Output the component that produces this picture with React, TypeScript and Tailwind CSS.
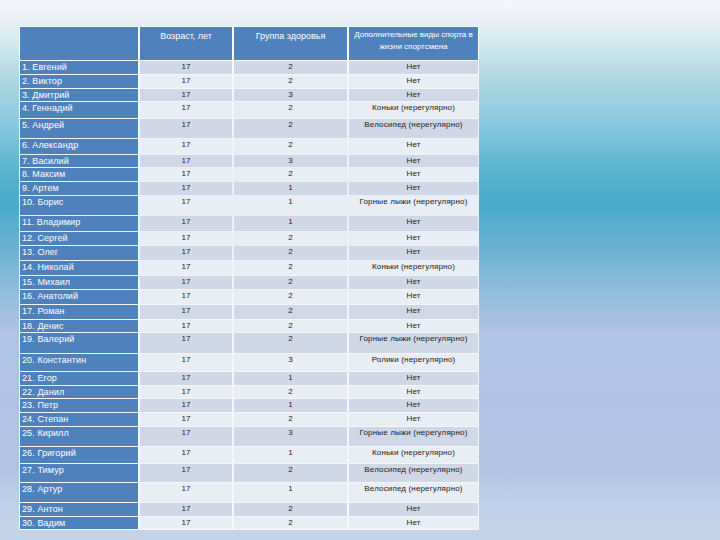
type Row = {
  name: string;
  group: string;
  sport: string;
  h: string;
};

// row heights are taken from the slide, they are not uniform
const rows: Row[] = [
  { name: "1. Евгений", group: "2", sport: "Нет", h: "h-[13px]" },
  { name: "2. Виктор", group: "2", sport: "Нет", h: "h-[13px]" },
  { name: "3. Дмитрий", group: "3", sport: "Нет", h: "h-[12px]" },
  { name: "4. Геннадий", group: "2", sport: "Коньки (нерегулярно)", h: "h-[16px]" },
  { name: "5. Андрей", group: "2", sport: "Велосипед (нерегулярно)", h: "h-[19px]" },
  { name: "6. Александр", group: "2", sport: "Нет", h: "h-[15px]" },
  { name: "7. Василий", group: "3", sport: "Нет", h: "h-[12px]" },
  { name: "8. Максим", group: "2", sport: "Нет", h: "h-[13px]" },
  { name: "9. Артем", group: "1", sport: "Нет", h: "h-[13px]" },
  { name: "10. Борис", group: "1", sport: "Горные лыжи (нерегулярно)", h: "h-[19px]" },
  { name: "11. Владимир", group: "1", sport: "Нет", h: "h-[15px]" },
  { name: "12. Сергей", group: "2", sport: "Нет", h: "h-[13px]" },
  { name: "13. Олег", group: "2", sport: "Нет", h: "h-[14px]" },
  { name: "14. Николай", group: "2", sport: "Коньки (нерегулярно)", h: "h-[14px]" },
  { name: "15. Михаил", group: "2", sport: "Нет", h: "h-[13px]" },
  { name: "16. Анатолий", group: "2", sport: "Нет", h: "h-[14px]" },
  { name: "17. Роман", group: "2", sport: "Нет", h: "h-[14px]" },
  { name: "18. Денис", group: "2", sport: "Нет", h: "h-[12px]" },
  { name: "19. Валерий", group: "2", sport: "Горные лыжи (нерегулярно)", h: "h-[20px]" },
  { name: "20. Константин", group: "3", sport: "Ролики (нерегулярно)", h: "h-[17px]" },
  { name: "21. Егор", group: "1", sport: "Нет", h: "h-[13px]" },
  { name: "22. Данил", group: "2", sport: "Нет", h: "h-[12px]" },
  { name: "23. Петр", group: "1", sport: "Нет", h: "h-[13px]" },
  { name: "24. Степан", group: "2", sport: "Нет", h: "h-[13px]" },
  { name: "25. Кирилл", group: "3", sport: "Горные лыжи (нерегулярно)", h: "h-[19px]" },
  { name: "26. Григорий", group: "1", sport: "Коньки (нерегулярно)", h: "h-[16px]" },
  { name: "27. Тимур", group: "2", sport: "Велосипед (нерегулярно)", h: "h-[18px]" },
  { name: "28. Артур", group: "1", sport: "Велосипед (нерегулярно)", h: "h-[19px]" },
  { name: "29. Антон", group: "2", sport: "Нет", h: "h-[13px]" },
  { name: "30. Вадим", group: "2", sport: "Нет", h: "h-[12px]" },
];

const font = "font-['Liberation_Sans',Arial,sans-serif]";

export default function App() {
  return (
    <div
      className={`h-[540px] w-[720px] overflow-hidden pl-[19px] pt-[26px] ${font} bg-[linear-gradient(180deg,#f4f7fa_0px,#edf2f6_15px,#e3edf5_28px,#d8eef0_34px,#c8e4ec_50px,#bcdce8_67px,#a8d4e0_87px,#96cee0_110px,#88c8e0_127px,#6cbcd4_150px,#56b0cc_180px,#48aac8_207px,#5eb0cf_233px,#70b2d0_253px,#80b8d8_273px,#96c0dc_300px,#a8c2e0_323px,#aec4e2_333px,#b0c2e2_400px,#b0c4e2_467px,#bcd0e8_500px,#c4d4e8_540px)]`}
    >
      <div className="inline-flex flex-col gap-[1px] bg-white/85 p-[1px]">
        {/* Header */}
        <div className="flex h-[33px] gap-[2px]">
          <div className="w-[118px] bg-[#4f81bd]" />
          <div className="w-[92px] bg-[#4f81bd] pt-[3px] text-center text-[9px] leading-[12px] text-white">
            Возраст, лет
          </div>
          <div className="w-[113px] bg-[#4f81bd] pt-[3px] text-center text-[9px] leading-[12px] text-white">
            Группа здоровья
          </div>
          <div className="w-[129px] bg-[#4f81bd] pt-[2px] text-center text-[8px] leading-[12px] whitespace-nowrap text-white">
            Дополнительные виды спорта в
            <br />
            жизни спортсмена
          </div>
        </div>

        {rows.map((r, i) => {
          const band = i % 2 === 0 ? "bg-[#d0d8e8]" : "bg-[#e9edf4]";
          return (
            <div key={r.name} className={`flex gap-[2px] ${r.h}`}>
              <div className="w-[118px] bg-[#4f81bd] pl-[2px] pt-[1px] text-[9px] leading-[11px] tracking-[0.1px] whitespace-nowrap text-white">
                {r.name}
              </div>
              <div className={`w-[92px] ${band} pt-[1px] text-center text-[8px] leading-[10px] text-[#1a1a1a]`}>
                17
              </div>
              <div className={`w-[113px] ${band} pt-[1px] text-center text-[8px] leading-[10px] text-[#1a1a1a]`}>
                {r.group}
              </div>
              <div className={`w-[129px] ${band} pt-[1px] text-center text-[8px] leading-[10px] tracking-[0.15px] whitespace-nowrap text-[#1a1a1a]`}>
                {r.sport}
              </div>
            </div>
          );
        })}
      </div>
    </div>
  );
}
